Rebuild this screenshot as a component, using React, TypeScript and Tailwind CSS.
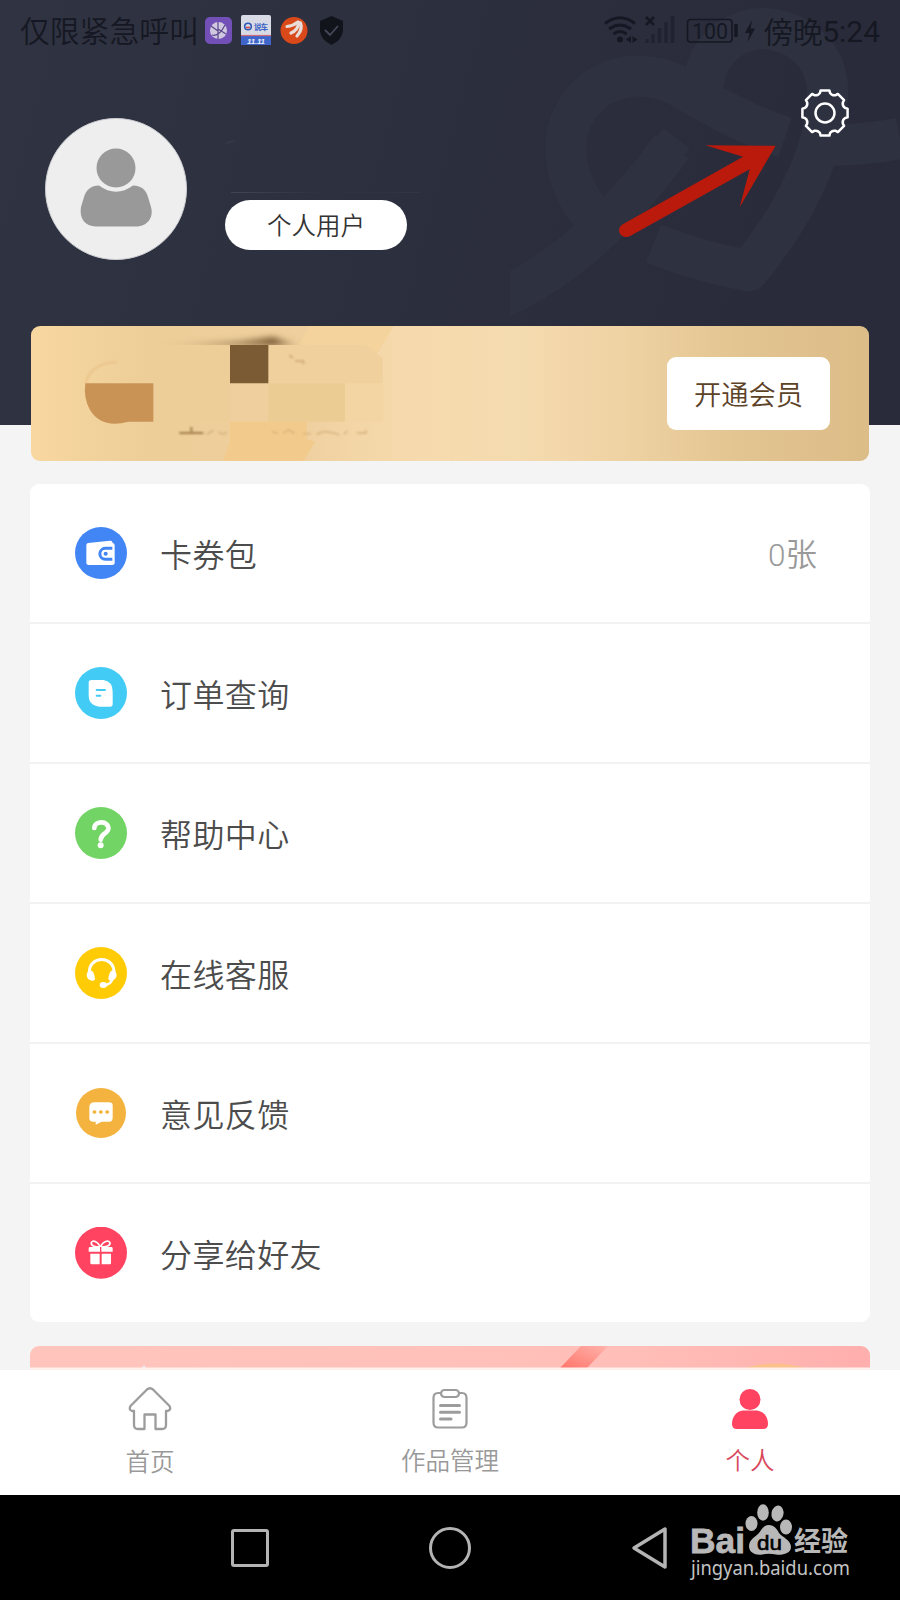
import type { ReactNode } from 'react';

interface MenuItem {
  label: string;
  extra?: ReactNode;
  icon: ReactNode;
}

// 8-tooth outline of the settings icon
const gearPath = (() => {
  const pt = (deg: number, r: number) => {
    const a = (deg * Math.PI) / 180;
    return `${(25 + r * Math.cos(a)).toFixed(2)} ${(25 + r * Math.sin(a)).toFixed(2)}`;
  };
  let d = '';
  for (let i = 0; i < 8; i++) {
    const c = i * 45;
    d += `${i === 0 ? 'M' : 'L'}${pt(c - 11, 23)} L${pt(c + 11, 23)} L${pt(c + 14, 20.8)} Q${pt(c + 22.5, 18.4)} ${pt(c + 31, 20.8)} `;
  }
  return d + 'Z';
})();

const menu: MenuItem[] = [
  {
    label: '卡券包',
    extra: (
      <>
        <span className="font-[Roboto]">0</span>张
      </>
    ),
    icon: (
      <svg viewBox="0 0 156 156" className="size-[52px]">
        <circle cx="78" cy="78" r="78" fill="#4285f4" />
        <path d="M39 48 L105 41 Q112 40 113 48 H113 Q119 49 119 55 V108 Q119 114 112 114 H41 Q34 114 34 108 V54 Q34 49 39 48Z" fill="#fff" />
        <path d="M112 64 H91 a16 16 0 0 0 0 33 H112" fill="none" stroke="#4285f4" strokeWidth="9" />
        <circle cx="92" cy="80" r="6" fill="#4285f4" />
      </svg>
    ),
  },
  {
    label: '订单查询',
    icon: (
      <svg viewBox="0 0 156 156" className="size-[52px]">
        <circle cx="78" cy="78" r="78" fill="#42cbf4" />
        <path d="M49 39 H85 Q113 43 113 74 V111 Q113 119 105 119 H74 Q41 116 41 84 V47 Q41 39 49 39Z" fill="#fff" />
        <path d="M65 69 H90 M65 86 H76" stroke="#42cbf4" strokeWidth="6" strokeLinecap="round" />
      </svg>
    ),
  },
  {
    label: '帮助中心',
    icon: (
      <svg viewBox="0 0 156 156" className="size-[52px]">
        <circle cx="78" cy="78" r="78" fill="#72d464" />
        <path d="M58 63 C59 40 101 40 100 65 C99 80 78 79 77 98" fill="none" stroke="#fff" strokeWidth="14" strokeLinecap="round" />
        <circle cx="77" cy="115" r="9" fill="#fff" />
      </svg>
    ),
  },
  {
    label: '在线客服',
    icon: (
      <svg viewBox="0 0 156 156" className="size-[52px]">
        <circle cx="78" cy="78" r="78" fill="#ffcb05" />
        <path d="M43 76 C41 25 119 25 117 76" fill="none" stroke="#fff" strokeWidth="9" />
        <path d="M44 70 Q57 69 60 95 Q60 101 51 101 Q36 99 35 85 Q36 73 44 70Z M116 70 Q103 69 100 95 Q100 101 108 101 Q124 99 125 85 Q124 73 116 70Z" fill="#fff" />
        <path d="M112 98 Q106 112 87 115" fill="none" stroke="#fff" strokeWidth="7" />
        <ellipse cx="85" cy="114" rx="11" ry="9" fill="#fff" />
      </svg>
    ),
  },
  {
    label: '意见反馈',
    icon: (
      <svg viewBox="0 0 156 156" className="size-[52px]">
        <circle cx="78" cy="78" r="75" fill="#f3b33e" />
        <path d="M56 46 H101 Q113 46 113 55 V93 Q113 104 102 104 H80 L62 113 V104 H53 Q43 104 43 94 V60 Q43 48 56 46Z" fill="#fff" />
        <path d="M58 75h1 M77 75h1 M96 75h1" stroke="#f3b33e" strokeWidth="11" strokeLinecap="round" />
      </svg>
    ),
  },
  {
    label: '分享给好友',
    icon: (
      <svg viewBox="0 0 156 156" className="size-[52px]">
        <circle cx="78" cy="77" r="78" fill="#ff4360" />
        <path d="M76 60 C68 42 52 38 49 47 C47 56 58 60 76 60 C94 60 107 56 105 47 C100 38 84 42 76 60" fill="none" stroke="#fff" strokeWidth="5" />
        <path d="M45 60 H109 Q113 60 113 64 V74 H41 V64 Q41 60 45 60Z M46 80 H74 V112 H50 Q46 112 46 108Z M80 80 H108 V108 Q108 112 104 112 H80Z" fill="#fff" />
        <path d="M77 60 V80" stroke="#ff4360" strokeWidth="4" />
      </svg>
    ),
  },
];

function StatusBar() {
  return (
    <div className="relative flex h-[62px] items-center justify-between pl-[20px] pr-[20px] text-[#151822]">
      <div className="flex items-center">
        <span className="w-[185px] pb-[3px] text-[29.8px] leading-none font-[350] whitespace-nowrap">仅限紧急呼叫</span>
        <svg viewBox="205 14 140 34" className="h-[34px] w-[140px]">
          <rect x="205" y="17" width="27" height="27" rx="5" fill="#7350b8" />
          <circle cx="218.5" cy="30.5" r="8.5" fill="#cfc8df" />
          <path d="M218 22 V39 M218 31 L211 26 M218 29 L226 34 M212 35 Q219 37 225 25" fill="none" stroke="#5b478c" strokeWidth="1.2" />
          <rect x="241" y="15" width="30" height="30" rx="2" fill="#d8dbe5" />
          <rect x="241" y="36" width="30" height="9" fill="#3f65cb" />
          <path d="M241 35.5h30" stroke="#d36a78" strokeWidth="1.2" />
          <circle cx="248" cy="26.5" r="3.3" fill="none" stroke="#3159b8" strokeWidth="1.6" />
          <path d="M246 27.5 h4" stroke="#cf4b4b" strokeWidth="1.6" />
          <text x="254" y="29.5" fontSize="7.5" fontWeight="700" fill="#3a62c4" textLength="14">说车</text>
          <text x="247" y="44" fontSize="8" fontWeight="700" fontStyle="italic" fontFamily="Liberation Sans, sans-serif" fill="#e8edfa" textLength="18">11.11</text>
          <circle cx="294" cy="30.5" r="13.5" fill="#d9491a" />
          <g fill="none" stroke="#e8ddd8" strokeWidth="3.200" strokeLinecap="round">
            <path d="M287 26.500 Q293 26 298 22" />
            <path d="M291 33 Q298 30 299 22.500" />
            <path d="M297 36 Q303 29 300.500 23" />
          </g>
          <path d="M331.500 16 L343 21 V31 Q342 40 331.500 45 Q321 40 320 31 V21Z" fill="#12141c" />
          <path d="M325 30 L330 35 L338 26" fill="none" stroke="#444857" strokeWidth="1.8" />
        </svg>
      </div>
      <div className="flex items-center">
        <svg viewBox="602 14 156 34" className="h-[34px] w-[156px]">
          <g fill="none" stroke="#151822" strokeWidth="3">
            <path d="M605 23.500 Q620 12 635 23.500" />
            <path d="M609 29 Q620 21 631 29" />
            <path d="M613.500 34 Q620 29 626.500 34" />
          </g>
          <circle cx="620" cy="39.500" r="3" fill="#151822" />
          <path d="M631 36 v7 l-5 -3.500z M632.500 36 v7 l5 -3.500z" fill="#151822" />
          <path d="M646 17 l8 8 m0 -8 l-8 8" stroke="#151822" strokeWidth="2.5" />
          <path d="M647 39v4 M653 34v9 M659.500 28v15 M666 22v21 M672.500 16v27" stroke="#20232f" strokeWidth="3.500" />
          <rect x="687.500" y="19.500" width="44.500" height="22.500" rx="3" fill="none" stroke="#151822" strokeWidth="1.600" />
          <text x="692" y="38.500" fontSize="22.500" fontFamily="Roboto, sans-serif" fill="#151822" textLength="36" lengthAdjust="spacingAndGlyphs">100</text>
          <path d="M736 24v13" stroke="#151822" strokeWidth="3.500" />
          <path d="M752 20 L745 33 H749.500 L747.500 42 L755 28.500 H750.500Z" fill="#151822" />
        </svg>
        <div className="flex w-[122px] items-center justify-end text-[30px] leading-none whitespace-nowrap">
          <span className="pb-[3px] font-[350] tracking-[-0.5px]">傍晚</span>
          <span className="pt-px font-[Roboto] text-[30px]">5:24</span>
        </div>
      </div>
    </div>
  );
}

function Header() {
  return (
    <header className="relative h-[425px] bg-linear-[105deg,#303342_0%,#2c2f3e_45%,#292b3a_85%]">
      {/* background logo */}
      <svg viewBox="30 -90 1170 990" className="absolute top-0 right-0 h-[330px] w-[390px]">
        <g fill="none" stroke="#2e313f" strokeWidth="124" strokeLinejoin="round">
          <path d="M-10 810 Q150 740 300 600 Q440 460 515 350" />
          <path d="M495 370 L530 325" strokeWidth="100" strokeLinejoin="round" />
          <path d="M310 590 C190 480 170 330 230 240 C300 125 440 115 550 175 C640 230 740 285 855 322" />
          <path d="M608 190 C610 60 700 0 785 -5 C900 0 990 80 982 200 C980 360 880 560 745 722 C650 705 560 680 460 640" />
          <path d="M960 347 Q1100 345 1200 325" />
        </g>
      </svg>

      <StatusBar />

      <div className="relative flex justify-between pr-[50px] pl-[45px]">
        <div className="mt-[55px] flex">
          <svg viewBox="0 0 142 142" className="mt-px size-[142px]">
            <circle cx="71" cy="71" r="70.500" fill="#eee" stroke="#cdced2" />
            <circle cx="71" cy="50" r="19.500" fill="#999" />
            <path d="M54 67.500 Q71 80 88 67.500 C97 68 101 72 103 79 L106 89 C109 100 102 108.500 91 108.500 H51 C40 108.500 34 100 36 89 L39 79 C41 72 46 67.500 54 67.500Z" fill="#999" />
          </svg>
          <div className="ml-[38px] flex flex-col pt-[24px]">
            <div className="flex h-[59px] flex-col justify-between">
              <div className="h-[2px] w-[10px] -rotate-20 bg-[#353846]" />
              <div className="mb-[7px] ml-[6px] h-px w-[190px] bg-linear-to-r from-[#424552] via-[#2d303f] to-[#323543]" />
            </div>
            <div className="flex h-[50px] w-[182px] items-center justify-center rounded-full bg-white text-[24.5px] font-[350] text-[#333]">
              个人用户
            </div>
          </div>
        </div>
        <svg viewBox="0 0 50 50" className="mt-[26px] size-[50px]" fill="none" stroke="#fff" strokeWidth="2.500">
          <path d={gearPath} strokeLinejoin="round" />
          <circle cx="25" cy="25" r="9.500" />
        </svg>
      </div>

      {/* red pointer */}
      <svg viewBox="350 340 480 290" className="absolute top-[143px] left-[617px] h-[97px] w-[160px]">
        <path d="M826 348 L615 346 L728 381 L366 584 C345 598 360 628 387 620 L748 418 L718 532Z" fill="#ba1a0c" />
      </svg>
    </header>
  );
}

function VipCard() {
  return (
    <div className="relative mx-[31px] -mt-[99px] flex h-[135px] items-center justify-end overflow-hidden rounded-[9px] bg-linear-[90deg,#f8d7a0_0%,#edce98_14%,#efcf9e_32%,#f5d9ac_45%,#f5dbb0_58%,#f0d3a4_70%,#e3c592_84%,#dcbc87_100%] pr-[39px]">
      <svg viewBox="33 33 1257 405" className="absolute top-0 left-0 h-[135px] w-[419px]">
        <defs>
          <filter id="soft" x="-20%" y="-100%" width="140%" height="300%">
            <feGaussianBlur stdDeviation="9" />
          </filter>
          <filter id="smudge" x="-10%" y="-50%" width="120%" height="200%">
            <feGaussianBlur stdDeviation="2.500" />
          </filter>
          <linearGradient id="shade">
            <stop offset="0" stopColor="#8a6c43" stopOpacity="0" />
            <stop offset=".5" stopColor="#8a6c43" stopOpacity=".7" />
            <stop offset=".8" stopColor="#7b5b35" />
            <stop offset="1" stopColor="#8a6c43" stopOpacity="0" />
          </linearGradient>
          <linearGradient id="sheen">
            <stop offset="0" stopColor="#f5d7a6" stopOpacity="0" />
            <stop offset="1" stopColor="#f6dbaf" />
          </linearGradient>
        </defs>
        <path d="M1120 33 H1290 V438 H850 L885 380 L1075 110Z" fill="url(#sheen)" />
        <path d="M870 33 H1120 L1070 120 L830 100Z" fill="#f4d39c" />
        <path d="M400 92 L660 78 L760 66 L850 92Z" fill="url(#shade)" filter="url(#soft)" />
        <path d="M400 90 H630 V320 H400Z" fill="#edce99" />
        <path d="M745 90 H1040 L1088 130 V205 H745Z" fill="#f0d09c" />
        <path d="M745 205 H975 V320 H745Z" fill="#ebcc93" />
        <path d="M630 205 H745 V320 H630Z" fill="#efcf9d" />
        <path d="M975 205 H1090 V320 H975Z" fill="#f3d5a4" />
        <path d="M630 90 H745 V205 H630Z" fill="#7a5b34" />
        <path d="M630 320 H860 V372 L885 380 L850 438 H610 L630 380Z" fill="#f2cb8c" />
        <path d="M197 205 C205 165 240 142 290 142" fill="none" stroke="#e0b478" strokeWidth="6" opacity=".5" filter="url(#smudge)" />
        <path d="M196 205 H400 V320 H325 Q245 342 210 285 Q190 250 196 205Z" fill="#c99355" />
        <g fill="none" filter="url(#smudge)">
          <path d="M478 354 h72 M514 336 v14" stroke="#a07d49" strokeWidth="6" />
          <path d="M808 122 q8 2 10 8 M825 138 h25 v10" stroke="#c9a672" strokeWidth="5" />
          <path d="M560 358 l20 -12 M595 350 l12 8 l14 -6 M755 350 l20 6 M790 354 l15 -10 l20 12 M848 356 h24 M890 358 q20 -12 40 -6 q14 0 28 8 M972 358 l10 -10 M1010 354 h28 v-10" stroke="#d3ae78" strokeWidth="4" />
        </g>
      </svg>
      <button className="flex h-[73px] w-[163px] items-center justify-center rounded-[9px] bg-white text-[27.3px] font-[350] text-[#5c4227]">
        开通会员
      </button>
    </div>
  );
}

function TabBar() {
  return (
    <nav className="grid h-[125px] grid-cols-3 bg-white text-[24.5px] leading-none font-[350] text-[#999]">
      <div className="flex flex-col items-center pt-[16px]">
        <svg viewBox="0 0 44 45" className="h-[45px] w-[44px]" fill="none" stroke="#9c9c9c" strokeWidth="2.300" strokeLinejoin="round">
          <path d="M19 3.500 Q22 1 25 3.500 L41.500 20 Q43.500 24 39.500 25 H38 V39 Q38 43 34 43 H27.500 V28.500 H16.500 V43 H10 Q6 43 6 39 V25 H4 Q0.500 24 2.500 20Z" />
        </svg>
        <span className="mt-[18px]">首页</span>
      </div>
      <div className="flex flex-col items-center pt-[16px]">
        <svg viewBox="0 0 44 45" className="h-[45px] w-[44px]" fill="none" stroke="#9c9c9c" strokeWidth="2.200">
          <path d="M13 7 H10 Q5.500 7 5.500 12 V36.500 Q5.500 41.500 10 41.500 H34 Q38.500 41.500 38.500 36.500 V12 Q38.500 7 34 7 H31" />
          <rect x="13" y="4" width="18" height="7" rx="3.500" />
          <path d="M12.500 19.500 H31.500 M12.500 26.300 H31.500 M12.500 33 H23" strokeWidth="3" strokeLinecap="round" />
        </svg>
        <span className="mt-[17px]">作品管理</span>
      </div>
      <div className="flex flex-col items-center pt-[16px] text-[#d9485c]">
        <svg viewBox="0 0 44 45" className="h-[45px] w-[44px]" fill="#ff4360">
          <circle cx="22" cy="13.500" r="10.500" />
          <path d="M15 24.500 H29 C36 25.500 40 31 40 38 Q40 43 35 43 H9 Q4 43 4 38 C4 31 8 25.500 15 24.500Z" />
        </svg>
        <span className="mt-[17px]">个人</span>
      </div>
    </nav>
  );
}

function SystemNav() {
  return (
    <div className="relative h-[105px] bg-black">
      <div className="flex h-full items-center pl-[231px]">
        <div className="size-[38px] rounded-[3px] border-[3px] border-[#b4b4b4]" />
        <div className="ml-[160px] size-[42px] rounded-full border-[3px] border-[#b4b4b4]" />
        <svg viewBox="0 0 38 44" className="ml-[160px] h-[44px] w-[38px]">
          <path d="M34 3 V41 L3 22Z" fill="none" stroke="#b4b4b4" strokeWidth="3.500" strokeLinejoin="round" />
        </svg>
      </div>
      <svg viewBox="686 1500 170 90" className="absolute top-[5px] left-[686px] h-[90px] w-[170px] overflow-visible" fill="#b8b8b8">
        <text x="690" y="1553" fontFamily="Liberation Sans, sans-serif" fontWeight="700" fontSize="35.500" stroke="#b8b8b8" strokeWidth=".8" textLength="55" lengthAdjust="spacingAndGlyphs">Bai</text>
        <ellipse cx="751.500" cy="1523.500" rx="6" ry="7.500" />
        <ellipse cx="763" cy="1512.500" rx="5.800" ry="8.300" />
        <ellipse cx="777.500" cy="1513.500" rx="6" ry="8" transform="rotate(10 777.500 1513.500)" />
        <ellipse cx="786" cy="1527" rx="6" ry="7.500" />
        <path d="M769 1525 C774 1525 777 1529 779 1533 C782 1537 791 1540 791 1547 C791 1554 781 1555.500 776 1554.500 Q769 1553 762 1554.500 C756 1555.500 749 1553 749 1546 C749 1540 755 1537 759 1533 C762 1529 764 1525 769 1525Z" />
        <text x="757" y="1550" fontFamily="Liberation Sans, sans-serif" fontSize="21" fill="#000" stroke="#000" strokeWidth=".6" textLength="25" lengthAdjust="spacingAndGlyphs">du</text>
        <text x="794" y="1551" fontWeight="700" fontSize="27" textLength="54">经验</text>
        <text x="691" y="1575" fontFamily="Noto Sans, sans-serif" fontSize="19.500" fill="#c4c4c4" textLength="159" lengthAdjust="spacingAndGlyphs">jingyan.baidu.com</text>
      </svg>
    </div>
  );
}

export default function App() {
  return (
    <div className="h-[1600px] w-[900px] overflow-hidden bg-[#f4f4f4] font-['Noto_Sans_CJK_SC',sans-serif]">
      <Header />
      <VipCard />

      <div className="mx-[30px] mt-[23px] h-[838px] divide-y-2 divide-[#f2f2f2] rounded-[9px] bg-white">
        {menu.map((item) => (
          <div key={item.label} className="flex h-[140px] items-center pr-[53px] pl-[45px] last:h-[138px]">
            {item.icon}
            <span className="ml-[33px] pb-px text-[32px] font-[350] tracking-[0.4px] text-[#4c4c4c]">{item.label}</span>
            {item.extra && <span className="ml-auto pt-[2px] text-[31.5px] font-[350] text-[#999]">{item.extra}</span>}
          </div>
        ))}
      </div>

      <div className="mx-[30px] mt-[24px] h-[24px] overflow-hidden rounded-t-[9px]">
        <svg viewBox="0 0 840 24" className="h-[24px] w-[840px]">
          <defs>
            <linearGradient id="promo">
              <stop offset="0" stopColor="#ffc5bd" />
              <stop offset=".7" stopColor="#ffbfb8" />
              <stop offset="1" stopColor="#ffafad" />
            </linearGradient>
            <linearGradient id="ribbon" x1="0" y1="1" x2="1" y2="0">
              <stop offset="0" stopColor="#ff746b" />
              <stop offset="1" stopColor="#ffb3aa" />
            </linearGradient>
          </defs>
          <rect width="840" height="22" fill="url(#promo)" />
          <path d="M530 22 L551 0 H578 L557 22Z" fill="url(#ribbon)" />
          <path d="M715 22 Q744 13 775 22Z" fill="#fbc18b" />
          <path d="M112 22 L114 19 L116 22Z" fill="#e8edf5" />
          <rect y="21.500" width="840" height="2.500" fill="#fff0ee" />
        </svg>
      </div>

      <TabBar />
      <SystemNav />
    </div>
  );
}
